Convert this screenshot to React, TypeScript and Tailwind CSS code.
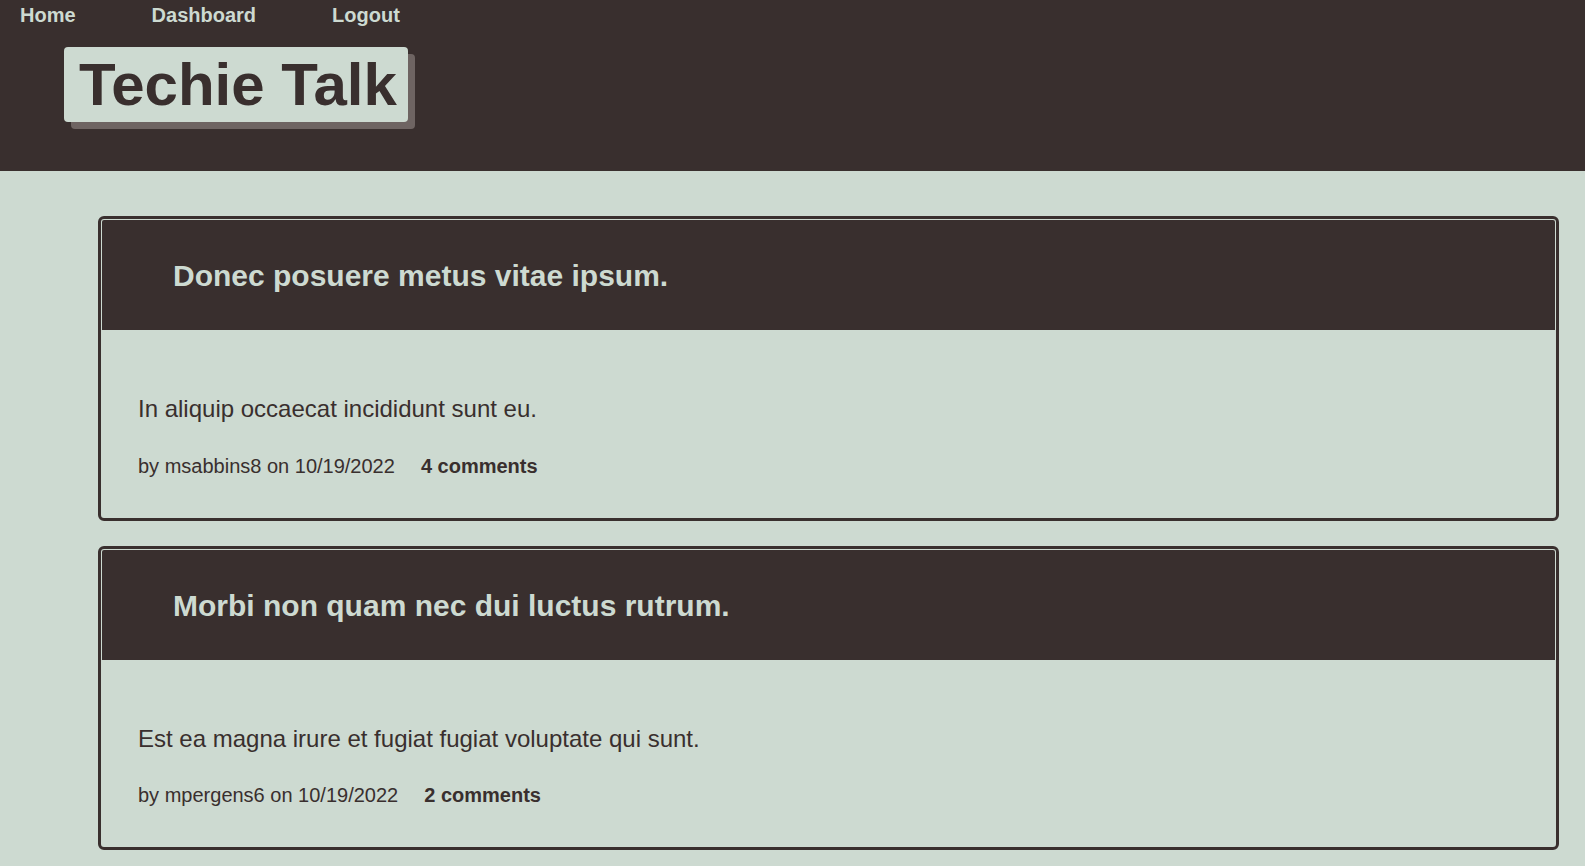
const posts = [
  {
    title: "Donec posuere metus vitae ipsum.",
    body: "In aliquip occaecat incididunt sunt eu.",
    author: "msabbins8",
    date: "10/19/2022",
    comments: 4,
  },
  {
    title: "Morbi non quam nec dui luctus rutrum.",
    body: "Est ea magna irure et fugiat fugiat voluptate qui sunt.",
    author: "mpergens6",
    date: "10/19/2022",
    comments: 2,
  },
]

function PostCard({ post }: { post: (typeof posts)[number] }) {
  return (
    <article className="border-[3px] border-[#392f2e] rounded-[6px] p-px bg-[#cddad1]">
      <div className="h-[110px] flex items-center pl-[71px] pt-[3px] bg-[#392f2e] rounded-t-[2px]">
        <h2 className="text-[30px] font-bold text-[#cddad1]">{post.title}</h2>
      </div>
      <div className="pt-[65px] pb-[39px] pl-[36px] text-[#392f2e]">
        <p className="text-[24px]">{post.body}</p>
        <p className="mt-[32px] text-[20px]">
          by {post.author} on {post.date}
          <a href="#" className="ml-[26px] font-bold">
            {post.comments} comments
          </a>
        </p>
      </div>
    </article>
  )
}

export default function App() {
  return (
    <div className="min-h-screen bg-[#cddad1] font-['Liberation_Sans',Arial,sans-serif] leading-[1.15]">
      <header className="h-[171px] bg-[#392f2e]">
        <nav className="flex gap-[76px] pl-5 pt-1 text-[20px] font-bold text-[#cddad1]">
          <a href="#">Home</a>
          <a href="#">Dashboard</a>
          <a href="#">Logout</a>
        </nav>
        <div className="pl-[64px] pt-[20px]">
          <h1 className="inline-flex h-[75px] items-center pl-[15px] pr-[11px] rounded-[4px] bg-[#cddad1] text-[60px] font-bold text-[#392f2e] shadow-[7px_7px_0_#6e6462]">
            Techie Talk
          </h1>
        </div>
      </header>
      <main className="ml-[98px] mr-[26px] pt-[45px] pb-4 flex flex-col gap-[25px]">
        {posts.map(post => (
          <PostCard key={post.title} post={post} />
        ))}
      </main>
    </div>
  )
}
